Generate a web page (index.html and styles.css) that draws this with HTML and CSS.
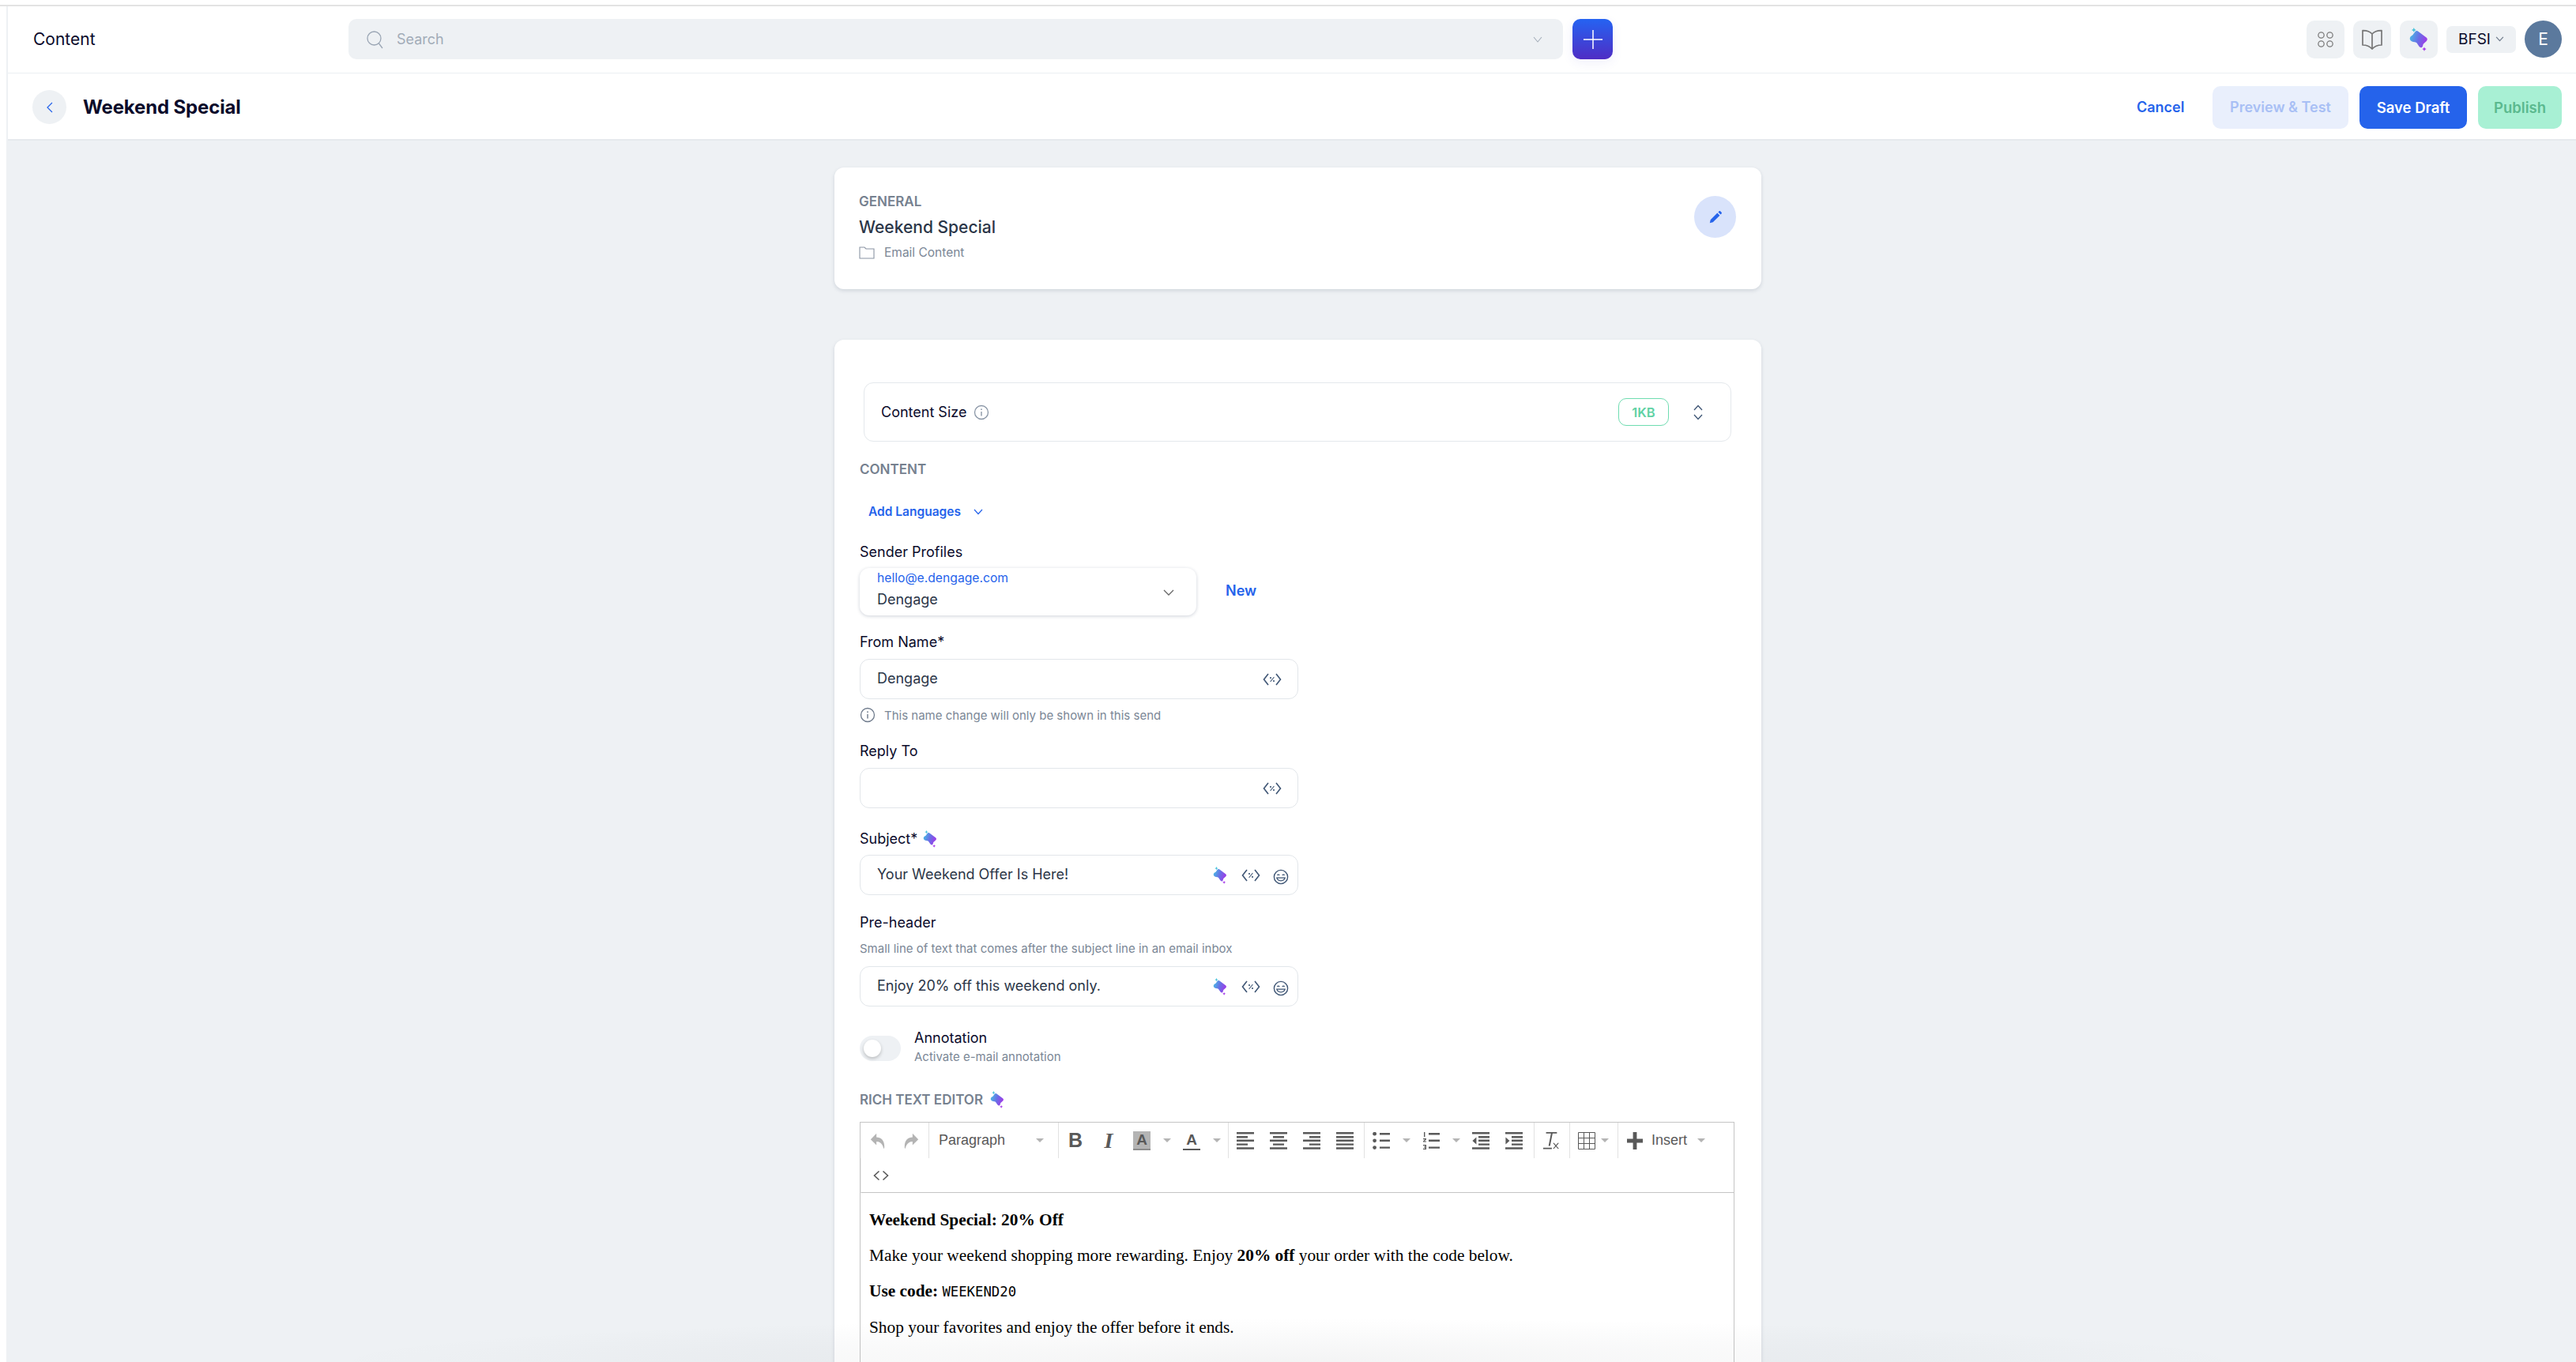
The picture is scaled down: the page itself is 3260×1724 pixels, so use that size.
FILE: index.html
```html
<!DOCTYPE html>
<html lang="en">
<head>
    <meta charset="UTF-8">
    <title>Content - Weekend Special</title>
    <link rel="stylesheet" href="styles.css">
</head>
<body>
    <svg class="defs" aria-hidden="true">
        <defs>
            <linearGradient id="aiGrad" x1="0" y1="0.3" x2="1" y2="0.6">
                <stop offset="0" stop-color="#49b8e4"/>
                <stop offset="0.5" stop-color="#6a6ee6"/>
                <stop offset="1" stop-color="#a238e8"/>
            </linearGradient>
            <symbol id="ai" viewBox="0 0 24 30">
                <path fill="url(#aiGrad)" d="M7.5 5C8.6 3.8 10.4 3.8 11.6 5L21.6 12.6C23.2 14 23.2 15.6 21.8 17L18 20.4C17.4 21 17.4 22 17 23.4C16.2 25.6 13.8 25.6 12.6 24L9.6 19.6C9 18.8 8.2 18.4 7 18.2C4 18 1.4 17 0.8 14.4C0.4 12.2 1.8 11 3.4 10C5 9 6.4 6.2 7.5 5Z"/>
                <path fill="#4cc4dc" d="M5.8 0L6.8 1.9L8.7 2.9L6.8 3.9L5.8 5.8L4.8 3.9L2.9 2.9L4.8 1.9Z"/>
                <path fill="#a63ce8" d="M19 24.4L19.9 26.2L21.7 27.1L19.9 28L19 29.8L18.1 28L16.3 27.1L18.1 26.2Z"/>
            </symbol>
            <symbol id="var" viewBox="0 0 24 18">
                <path fill="none" stroke="#3f5675" stroke-width="1.6" d="M7 2L1.5 9L7 16M17 2L22.5 9L17 16"/>
                <path fill="none" stroke="#3f5675" stroke-width="1.1" d="M14.4 6L9.6 12"/>
                <circle cx="10" cy="7" r="1.1" fill="#3f5675"/>
                <circle cx="14" cy="11" r="1.1" fill="#3f5675"/>
            </symbol>
            <symbol id="smile" viewBox="0 0 20 20">
                <circle cx="10" cy="10" r="8.6" fill="none" stroke="#3f5675" stroke-width="1.4"/>
                <path fill="none" stroke="#3f5675" stroke-width="1.3" d="M4.8 11.2C6 16 14 16 15.2 11.2ZM5.4 8C6 6.8 7.6 6.8 8.2 8M11.8 8C12.4 6.8 14 6.8 14.6 8"/>
            </symbol>
            <symbol id="info" viewBox="0 0 20 20">
                <circle cx="10" cy="10" r="8.5" fill="none" stroke="currentColor" stroke-width="1.3"/>
                <path fill="none" stroke="currentColor" stroke-width="1.4" d="M10 9V14.5"/>
                <circle cx="10" cy="6.2" r="0.9" fill="currentColor"/>
            </symbol>
            <symbol id="al" viewBox="0 0 22 22">
                <path fill="#595959" d="M0 0H22V2.6H0ZM0 5H14V7.4H0ZM0 9.6H22V12H0ZM0 14.4H14V16.8H0ZM0 19.2H22V21.8H0Z"/>
            </symbol>
            <symbol id="ac" viewBox="0 0 22 22">
                <path fill="#595959" d="M0 0H22V2.6H0ZM4 5H18V7.4H4ZM0 9.6H22V12H0ZM4 14.4H18V16.8H4ZM0 19.2H22V21.8H0Z"/>
            </symbol>
            <symbol id="ar" viewBox="0 0 22 22">
                <path fill="#595959" d="M0 0H22V2.6H0ZM8 5H22V7.4H8ZM0 9.6H22V12H0ZM8 14.4H22V16.8H8ZM0 19.2H22V21.8H0Z"/>
            </symbol>
            <symbol id="aj" viewBox="0 0 22 22">
                <path fill="#595959" d="M0 0H22V2.6H0ZM0 5H22V7.4H0ZM0 9.6H22V12H0ZM0 14.4H22V16.8H0ZM0 19.2H22V21.8H0Z"/>
            </symbol>
        </defs>
    </svg>

    <div class="top-line"></div>
    <div class="app">
        <header class="nav-bar">
            <div class="nav-title">Content</div>
            <div class="search">
                <svg class="search-icon" viewBox="0 0 24 24"><circle cx="10.5" cy="10.5" r="8.5" fill="none" stroke="#9aa5b4" stroke-width="1.3"/><path d="M16.5 17L21 23" stroke="#9aa5b4" stroke-width="1.3"/></svg>
                <span class="search-text">Search</span>
                <svg class="search-caret" viewBox="0 0 12 8"><path d="M1 1L6 7L11 1" fill="none" stroke="#a5aeba" stroke-width="1.1"/></svg>
            </div>
            <button class="add-btn"><svg viewBox="0 0 28 28"><path d="M14 1V27M1 14H27" stroke="#fff" stroke-width="1.6"/></svg></button>
            <div class="nav-right">
                <div class="nav-icon">
                    <svg class="apps-svg" viewBox="0 0 24 24"><g fill="none" stroke="#7c7c7c" stroke-width="1.4"><circle cx="6" cy="6" r="4"/><circle cx="18" cy="6" r="4"/><circle cx="6" cy="18" r="4"/><circle cx="18" cy="18" r="4"/></g></svg>
                </div>
                <div class="nav-icon">
                    <svg class="book-svg" viewBox="0 0 28 28"><path d="M14 7C11 3.5 6 2.5 2 2.6V21C6 21 10.5 22 14 26C17.5 22 22 21 26 21V2.6C22 2.5 17 3.5 14 7ZM14 7V26" fill="none" stroke="#777" stroke-width="1.7" stroke-linejoin="round"/></svg>
                </div>
                <div class="nav-icon">
                    <svg class="ai-nav"><use href="#ai"/></svg>
                </div>
                <div class="tenant">BFSI<svg viewBox="0 0 12 8"><path d="M1 1L6 6.5L11 1" fill="none" stroke="#6f7b8c" stroke-width="1.4"/></svg></div>
                <div class="avatar">E</div>
            </div>
        </header>

        <div class="action-bar">
            <button class="back-btn"><svg viewBox="0 0 8 14"><path d="M7 1L1 7L7 13" fill="none" stroke="#2563eb" stroke-width="1.2"/></svg></button>
            <h1 class="page-title">Weekend Special</h1>
            <div class="actions">
                <button class="btn btn-link">Cancel</button>
                <button class="btn btn-preview">Preview &amp; Test</button>
                <button class="btn btn-save">Save Draft</button>
                <button class="btn btn-publish">Publish</button>
            </div>
        </div>

        <main class="main">
            <div class="column">
                <section class="card card-general">
                    <div>
                        <div class="section-label">GENERAL</div>
                        <div class="general-name">Weekend Special</div>
                        <div class="general-folder">
                            <svg viewBox="0 0 20 16"><path d="M1 15V1H7L9 3H19V15Z" fill="none" stroke="#8a94a3" stroke-width="1.1"/></svg>
                            Email Content
                        </div>
                    </div>
                    <button class="edit-btn"><svg viewBox="0 0 20 20"><path d="M2 18L3 13.6L12.6 4L16 7.4L6.4 17ZM13.8 2.8L15 1.6C15.6 1 16.4 1 17 1.6L18.4 3C19 3.6 19 4.4 18.4 5L17.2 6.2Z" fill="#2563eb"/></svg></button>
                </section>

                <section class="card card-form">
                    <div class="size-box">
                        <span class="size-label">Content Size</span>
                        <svg class="size-info"><use href="#info"/></svg>
                        <span class="size-badge">1KB</span>
                        <svg class="size-chevrons" viewBox="0 0 12 20"><path d="M1 7L6 1.5L11 7M1 13L6 18.5L11 13" fill="none" stroke="#3f5675" stroke-width="1.3"/></svg>
                    </div>

                    <div class="section-label content-label">CONTENT</div>
                    <div class="add-lang">Add Languages<svg viewBox="0 0 12 8"><path d="M1 1L6 6.5L11 1" fill="none" stroke="#2563eb" stroke-width="1.2"/></svg></div>

                    <label class="field-label sender-label">Sender Profiles</label>
                    <div class="sender-row">
                        <div class="sender-select">
                            <div class="sender-mail">hello@e.dengage.com</div>
                            <div class="sender-name">Dengage</div>
                            <svg viewBox="0 0 14 8"><path d="M1 1L7 7L13 1" fill="none" stroke="#666" stroke-width="1.3"/></svg>
                        </div>
                        <a class="new-link">New</a>
                    </div>

                    <label class="field-label from-label">From Name*</label>
                    <div class="input-box">
                        <span class="input-text">Dengage</span>
                        <svg class="i-var"><use href="#var"/></svg>
                    </div>
                    <div class="hint-row"><svg><use href="#info"/></svg>This name change will only be shown in this send</div>

                    <label class="field-label reply-label">Reply To</label>
                    <div class="input-box">
                        <span class="input-text"></span>
                        <svg class="i-var"><use href="#var"/></svg>
                    </div>

                    <label class="field-label subject-label">Subject*<svg class="ai-small"><use href="#ai"/></svg></label>
                    <div class="input-box subject-box">
                        <span class="input-text">Your Weekend Offer Is Here!</span>
                        <svg class="ai-small"><use href="#ai"/></svg>
                        <svg class="i-var i-var-mid"><use href="#var"/></svg>
                        <svg class="i-smile"><use href="#smile"/></svg>
                    </div>

                    <label class="field-label pre-label">Pre-header</label>
                    <div class="pre-hint">Small line of text that comes after the subject line in an email inbox</div>
                    <div class="input-box">
                        <span class="input-text">Enjoy 20% off this weekend only.</span>
                        <svg class="ai-small"><use href="#ai"/></svg>
                        <svg class="i-var i-var-mid"><use href="#var"/></svg>
                        <svg class="i-smile"><use href="#smile"/></svg>
                    </div>

                    <div class="annotation">
                        <div class="toggle"><span class="toggle-knob"></span></div>
                        <div>
                            <div class="annotation-title">Annotation</div>
                            <div class="annotation-sub">Activate e-mail annotation</div>
                        </div>
                    </div>

                    <div class="section-label rte-label">RICH TEXT EDITOR<svg class="ai-small"><use href="#ai"/></svg></div>

                    <div class="editor">
                        <div class="toolbar">
                            <div class="tb-group">
                                <span class="tb-btn"><svg class="tb-svg" viewBox="0 0 22 24"><path fill="#b4b4b4" d="M9 2V7C15 7 20 11 20 20C20 22 19.4 23 19 23C18.6 21 17 13 9 13V18L1 10Z"/></svg></span>
                                <span class="tb-btn"><svg class="tb-svg" viewBox="0 0 22 24"><path fill="#b4b4b4" d="M13 2V7C7 7 2 11 2 20C2 22 2.6 23 3 23C3.4 21 5 13 13 13V18L21 10Z"/></svg></span>
                            </div>
                            <div class="tb-group tb-format">
                                <span class="tb-select">Paragraph</span>
                                <span class="tb-caret"></span>
                            </div>
                            <div class="tb-group tb-text">
                                <span class="tb-btn tb-b">B</span>
                                <span class="tb-btn tb-i">I</span>
                                <span class="tb-btn"><span class="tb-a tb-a-hl">A</span></span>
                                <span class="tb-drop"><span class="tb-caret"></span></span>
                                <span class="tb-btn"><span class="tb-a">A</span></span>
                                <span class="tb-drop"><span class="tb-caret"></span></span>
                            </div>
                            <div class="tb-group tb-align">
                                <span class="tb-btn"><svg class="tb-svg"><use href="#al"/></svg></span>
                                <span class="tb-btn"><svg class="tb-svg"><use href="#ac"/></svg></span>
                                <span class="tb-btn"><svg class="tb-svg"><use href="#ar"/></svg></span>
                                <span class="tb-btn"><svg class="tb-svg"><use href="#aj"/></svg></span>
                            </div>
                            <div class="tb-group tb-lists">
                                <span class="tb-btn"><svg class="tb-svg" viewBox="0 0 22 22"><path fill="#595959" d="M9 1H22V3.4H9ZM9 9.6H22V12H9ZM9 18.4H22V20.8H9Z"/><circle cx="2.6" cy="2.2" r="2.4" fill="#595959"/><circle cx="2.6" cy="10.8" r="2.4" fill="#595959"/><circle cx="2.6" cy="19.6" r="2.4" fill="#595959"/></svg></span>
                                <span class="tb-drop"><span class="tb-caret"></span></span>
                                <span class="tb-btn"><svg class="tb-svg" viewBox="0 0 22 22"><path fill="#595959" d="M8 1H22V3.4H8ZM8 9.6H22V12H8ZM8 18.4H22V20.8H8ZM2 0H3.4V6H2ZM1 8H5V9.2L2.6 11.4H5V12.6H1V11.6L3.4 9.2H1ZM1 16H5V22H1V20.8H3.6V19.6H2V18.4H3.6V17.2H1Z"/></svg></span>
                                <span class="tb-drop"><span class="tb-caret"></span></span>
                                <span class="tb-btn"><svg class="tb-svg" viewBox="0 0 22 22"><path fill="#595959" d="M0 0H22V2.6H0ZM8 5H22V7.4H8ZM8 9.6H22V12H8ZM8 14.4H22V16.8H8ZM0 19.2H22V21.8H0ZM5.4 6.4V15.4L0.4 10.9Z"/></svg></span>
                                <span class="tb-btn"><svg class="tb-svg" viewBox="0 0 22 22"><path fill="#595959" d="M0 0H22V2.6H0ZM8 5H22V7.4H8ZM8 9.6H22V12H8ZM8 14.4H22V16.8H8ZM0 19.2H22V21.8H0ZM0.4 6.4L5.4 10.9L0.4 15.4Z"/></svg></span>
                            </div>
                            <div class="tb-group tb-clear">
                                <span class="tb-btn"><svg class="tb-svg" viewBox="0 0 22 24"><path fill="#595959" d="M4 0H19V1.8H13L9.6 19H7.4L10.8 1.8H4ZM0 21.6H12V23.4H0ZM15 15L17.6 18L20.2 15H21.8L18.4 19L21.8 23H20.2L17.6 20L15 23H13.4L16.8 19L13.4 15Z"/></svg></span>
                            </div>
                            <div class="tb-group tb-table">
                                <span class="tb-btn"><svg class="tb-svg" viewBox="0 0 22 22"><path fill="none" stroke="#595959" stroke-width="1" d="M0.5 0.5H21.5V21.5H0.5ZM7.5 0.5V21.5M14.5 0.5V21.5M0.5 7.5H21.5M0.5 14.5H21.5"/></svg></span>
                                <span class="tb-drop tb-drop-table"><span class="tb-caret"></span></span>
                            </div>
                            <div class="tb-group tb-insert">
                                <svg class="tb-svg" viewBox="0 0 20 22"><path fill="#595959" d="M7.6 0H12.4V8.6H20V13.4H12.4V22H7.6V13.4H0V8.6H7.6Z"/></svg>
                                <span class="tb-select">Insert</span>
                                <span class="tb-caret"></span>
                            </div>
                        </div>
                        <div class="toolbar-two">
                            <svg viewBox="0 0 20 14"><path d="M7.5 1.5L1.5 7L7.5 12.5M12.5 1.5L18.5 7L12.5 12.5" fill="none" stroke="#595959" stroke-width="1.6"/></svg>
                        </div>
                        <div class="editor-body">
                            <p><strong>Weekend Special: 20% Off</strong></p>
                            <p>Make your weekend shopping more rewarding. Enjoy <strong>20% off</strong> your order with the code below.</p>
                            <p><strong>Use code:</strong> <code>WEEKEND20</code></p>
                            <p>Shop your favorites and enjoy the offer before it ends.</p>
                        </div>
                    </div>
                </section>
            </div>
        </main>
    </div>
    <div class="bottom-shade"></div>
</body>
</html>
```

FILE: styles.css
```css
* {
    box-sizing: border-box;
}
html, body {
    margin: 0;
    height: 1724px;
    overflow: hidden;
}
body {
    position: relative;
    font-family: Inter, "Liberation Sans", sans-serif;
    background-color: #fff;
    color: #0b0b2b;
}
button {
    font-family: inherit;
    border: none;
    padding: 0;
}
.defs {
    position: absolute;
    width: 0;
    height: 0;
}

.top-line {
    height: 8px;
    background-color: #fff;
    border-bottom: 2px solid #e3e3e3;
}
.app {
    margin-left: 8px;
    border-left: 2px solid #eef1f4;
    height: 1716px;
    background-color: #eef1f4;
}
.bottom-shade {
    position: absolute;
    left: 400px;
    bottom: 0;
    width: 2460px;
    height: 56px;
    pointer-events: none;
    background: radial-gradient(ellipse 50% 100% at 50% 100%, rgba(40, 50, 60, 0.055), rgba(40, 50, 60, 0));
}

/* top nav */
.nav-bar {
    height: 85px;
    display: flex;
    align-items: center;
    background-color: #fff;
    border-bottom: 1px solid #eceff2;
    padding: 0 18px 1px 32px;
}
.nav-title {
    width: 399px;
    font-size: 21px;
    color: #0b0b2b;
}
.search {
    width: 1537px;
    height: 51px;
    display: flex;
    align-items: center;
    background-color: #eef1f4;
    border-radius: 10px;
    padding: 0 26px 0 22px;
}
.search-icon {
    width: 24px;
    height: 24px;
}
.search-text {
    margin-left: 15px;
    font-size: 18px;
    color: #a2acb8;
}
.search-caret {
    width: 12px;
    height: 8px;
    margin-left: auto;
}
.add-btn {
    width: 51px;
    height: 51px;
    margin-left: 12px;
    border-radius: 10px;
    background: linear-gradient(180deg, #2563f2, #4f2dc4);
    box-shadow: 0 4px 14px rgba(60, 60, 200, 0.08);
    display: flex;
    align-items: center;
    justify-content: center;
}
.add-btn svg {
    width: 26px;
    height: 26px;
}
.nav-right {
    margin-left: auto;
    display: flex;
    align-items: center;
}
.nav-icon {
    width: 48px;
    height: 48px;
    border-radius: 10px;
    background-color: #eef1f4;
    margin-right: 11px;
    display: flex;
    align-items: center;
    justify-content: center;
}
.apps-svg {
    width: 22px;
    height: 22px;
}
.book-svg {
    width: 28px;
    height: 28px;
}
.ai-nav {
    width: 24px;
    height: 30px;
}
.tenant {
    width: 88px;
    height: 34px;
    margin-right: 11px;
    border-radius: 7px;
    background-color: #eef1f4;
    display: flex;
    align-items: center;
    justify-content: center;
    font-size: 19px;
}
.tenant svg {
    width: 11px;
    height: 7px;
    margin-left: 6px;
}
.avatar {
    width: 47px;
    height: 47px;
    border-radius: 50%;
    background-color: #5b799d;
    color: #fff;
    font-size: 21px;
    display: flex;
    align-items: center;
    justify-content: center;
}

/* action bar */
.action-bar {
    height: 85px;
    display: flex;
    align-items: center;
    background-color: #fff;
    border-bottom: 2px solid #e6e9ed;
    padding: 2px 18px 0 31px;
}
.back-btn {
    width: 43px;
    height: 43px;
    border-radius: 50%;
    background-color: #eef1f4;
    display: flex;
    align-items: center;
    justify-content: center;
}
.back-btn svg {
    width: 8px;
    height: 14px;
}
.page-title {
    margin: 0 0 0 21px;
    font-size: 24px;
    font-weight: 700;
    letter-spacing: -0.15px;
    color: #0b0b2b;
}
.actions {
    margin-left: auto;
    display: flex;
    align-items: center;
}
.btn {
    height: 54px;
    border-radius: 10px;
    font-size: 18px;
    font-weight: 600;
}
.btn-link {
    width: 96px;
    background: none;
    color: #2563eb;
    text-align: left;
}
.btn-preview {
    width: 172px;
    background-color: #e9effc;
    color: #a8bff5;
}
.btn-save {
    width: 136px;
    margin-left: 14px;
    background-color: #2563eb;
    color: #fff;
    font-size: 18.5px;
}
.btn-publish {
    width: 106px;
    margin-left: 14px;
    background-color: #a8f0d4;
    color: #5bb98f;
    font-size: 18.5px;
}

/* cards */
.main {
    display: flex;
    justify-content: center;
    padding: 34px 0 0 15px;
}
.column {
    width: 1173px;
}
.card {
    background-color: #fff;
    border-radius: 12px;
    box-shadow: 0 2px 5px rgba(30, 50, 80, 0.14);
}
.card-general {
    height: 154px;
    display: flex;
    justify-content: space-between;
    align-items: flex-start;
    padding: 33px 32px 0 31px;
}
.section-label {
    font-size: 17px;
    font-weight: 600;
    color: #76818f;
}
.general-name {
    margin-top: 10px;
    font-size: 21px;
    font-weight: 500;
    color: #2b3648;
}
.general-folder {
    margin-top: 10px;
    display: flex;
    align-items: center;
    font-size: 15.5px;
    color: #7b8796;
}
.general-folder svg {
    width: 20px;
    height: 16px;
    margin-right: 12px;
}
.edit-btn {
    width: 53px;
    height: 53px;
    margin: 3px 0 0;
    border-radius: 50%;
    background-color: #d9e3fb;
    display: flex;
    align-items: center;
    justify-content: center;
}
.edit-btn svg {
    width: 18px;
    height: 18px;
}
.card-form {
    margin-top: 64px;
    height: 1400px;
    padding: 54px 34px 0 32px;
}

/* content size */
.size-box {
    width: 1098px;
    height: 75px;
    margin-left: 5px;
    display: flex;
    align-items: center;
    border: 1px solid #e4e8ec;
    border-radius: 12px;
    padding: 0 35px 0 21px;
}
.size-label {
    font-size: 18px;
}
.size-info {
    width: 20px;
    height: 20px;
    margin-left: 9px;
    color: #8a96a6;
}
.size-badge {
    width: 64px;
    height: 35px;
    margin-left: auto;
    border: 1px solid #6fdcb0;
    border-radius: 10px;
    color: #5fd2a4;
    font-size: 16.5px;
    font-weight: 600;
    display: flex;
    align-items: center;
    justify-content: center;
}
.size-chevrons {
    width: 12px;
    height: 20px;
    margin-left: 31px;
}
.content-label {
    margin-top: 25px;
}
.add-lang {
    margin: 34px 0 0 11px;
    display: flex;
    align-items: center;
    font-size: 15.5px;
    font-weight: 600;
    color: #2563eb;
}
.add-lang svg {
    width: 12px;
    height: 8px;
    margin-left: 16px;
}

/* fields */
.field-label {
    display: flex;
    align-items: center;
    font-size: 18px;
    line-height: 22px;
    color: #0b0b2b;
}
.sender-label {
    margin-top: 31px;
}
.sender-row {
    margin-top: 9px;
    display: flex;
    align-items: center;
}
.sender-select {
    position: relative;
    width: 426px;
    height: 60px;
    border-radius: 12px;
    box-shadow: 0 1px 4px rgba(30, 50, 80, 0.22);
    padding: 1px 22px 0;
}
.sender-select svg {
    position: absolute;
    top: 27px;
    right: 28px;
    width: 14px;
    height: 8px;
}
.sender-mail {
    font-size: 15.7px;
    line-height: 24px;
    color: #2563eb;
}
.sender-name {
    margin-top: 2px;
    font-size: 18px;
    line-height: 26px;
    color: #2b3648;
}
.new-link {
    margin: -4px 0 0 37px;
    font-size: 18px;
    font-weight: 600;
    color: #2563eb;
}
.from-label {
    margin-top: 23px;
}
.input-box {
    width: 555px;
    height: 51px;
    margin-top: 10px;
    display: flex;
    align-items: center;
    border: 1px solid #e2e6ea;
    border-radius: 12px;
    padding: 0 13px 0 21px;
}
.input-text {
    flex: 1;
    font-size: 18px;
    color: #2b3648;
    padding-bottom: 3px;
}
.i-var {
    width: 24px;
    height: 18px;
    margin-right: 7px;
}
.i-var-mid {
    margin-left: 18px;
    margin-right: 16px;
}
.i-smile {
    width: 20px;
    height: 20px;
    margin-top: 4px;
    margin-right: -2px;
}
.ai-small {
    width: 18px;
    height: 22px;
}
.hint-row {
    height: 22px;
    margin-top: 9px;
    display: flex;
    align-items: center;
    font-size: 15px;
    color: #7b8796;
}
.hint-row svg {
    width: 20px;
    height: 20px;
    margin-right: 11px;
    color: #6f7b8c;
}
.reply-label {
    margin-top: 24px;
}
.subject-label {
    margin-top: 28px;
}
.subject-label .ai-small {
    margin-left: 7px;
}
.subject-box {
    margin-top: 9px;
}
.pre-label {
    margin-top: 24px;
}
.pre-hint {
    margin-top: 13px;
    font-size: 15px;
    line-height: 18px;
    color: #7b8796;
}
.pre-hint + .input-box {
    margin-top: 13px;
}

/* annotation */
.annotation {
    margin-top: 28px;
    display: flex;
    align-items: flex-start;
}
.toggle {
    position: relative;
    width: 52px;
    height: 32px;
    margin-top: 9px;
    border-radius: 16px;
    background-color: #eef1f4;
    margin-right: 17px;
}
.toggle-knob {
    position: absolute;
    left: 5px;
    top: 5px;
    width: 22px;
    height: 22px;
    border-radius: 50%;
    background-color: #fff;
    box-shadow: 0 2px 4px rgba(0, 0, 0, 0.22);
}
.annotation-title {
    font-size: 18px;
    line-height: 24px;
}
.annotation-sub {
    font-size: 15px;
    line-height: 24px;
    color: #7b8796;
}
.rte-label {
    margin-top: 30px;
    display: flex;
    align-items: center;
    height: 24px;
}
.rte-label .ai-small {
    margin-left: 9px;
}

/* editor */
.editor {
    width: 1107px;
    height: 500px;
    margin-top: 16px;
    border: 1px solid #c5c5c5;
}
.toolbar {
    height: 45px;
    display: flex;
    padding-left: 1px;
}
.tb-group {
    height: 45px;
    display: flex;
    align-items: center;
    border-right: 1px solid #e2e2e2;
    padding-right: 1px;
}
.tb-btn {
    width: 42px;
    height: 45px;
    display: flex;
    align-items: center;
    justify-content: center;
}
.tb-svg {
    width: 22px;
    height: 22px;
}
.tb-drop {
    width: 21px;
    height: 45px;
    display: flex;
    align-items: center;
    justify-content: center;
}
.tb-caret {
    width: 0;
    height: 0;
    border-left: 5px solid transparent;
    border-right: 5px solid transparent;
    border-top: 5px solid #b4b4b4;
}
.tb-select {
    font-size: 18px;
    color: #595959;
    font-family: "Liberation Sans", Arial, sans-serif;
}
.tb-format {
    width: 164px;
    padding: 0 18px 0 12px;
    justify-content: space-between;
}
.tb-b, .tb-i {
    font-family: "Liberation Sans", Arial, sans-serif;
    font-size: 25px;
    font-weight: 700;
    color: #595959;
}
.tb-i {
    font-family: "Liberation Serif", serif;
    font-style: italic;
    font-size: 28px;
}
.tb-a {
    width: 22px;
    height: 24px;
    display: flex;
    align-items: center;
    justify-content: center;
    font-family: "Liberation Sans", Arial, sans-serif;
    font-size: 19px;
    font-weight: 700;
    color: #595959;
    border-bottom: 2px solid #595959;
    line-height: 1;
}
.tb-a-hl {
    background-color: #b4b4b4;
    border-bottom-color: #8c8c8c;
}
.tb-text {
    width: 215px;
}
.tb-align {
    width: 172px;
}
.tb-lists {
    width: 215px;
}
.tb-clear {
    width: 45px;
}
.tb-table {
    width: 61px;
}
.tb-drop-table {
    width: 14px;
    margin-left: -5px;
}
.tb-insert {
    border-right: none;
    padding-left: 10px;
}
.tb-insert .tb-select {
    margin-left: 10px;
}
.tb-insert .tb-caret {
    margin-left: 13px;
}
.toolbar-two {
    height: 44px;
    display: flex;
    align-items: center;
    padding-left: 15px;
    border-bottom: 1px solid #c5c5c5;
    border-left: 1px solid #eee;
}
.toolbar-two svg {
    width: 20px;
    height: 14px;
}
.editor-body {
    padding: 22px 11px 0;
    font-family: "Liberation Serif", "Times New Roman", serif;
    font-size: 21.33px;
    color: #000;
}
.editor-body p {
    margin: 0 0 21px;
    line-height: 24px;
}
.editor-body code {
    font-family: "DejaVu Sans Mono", monospace;
    font-size: 17.3px;
}
```
